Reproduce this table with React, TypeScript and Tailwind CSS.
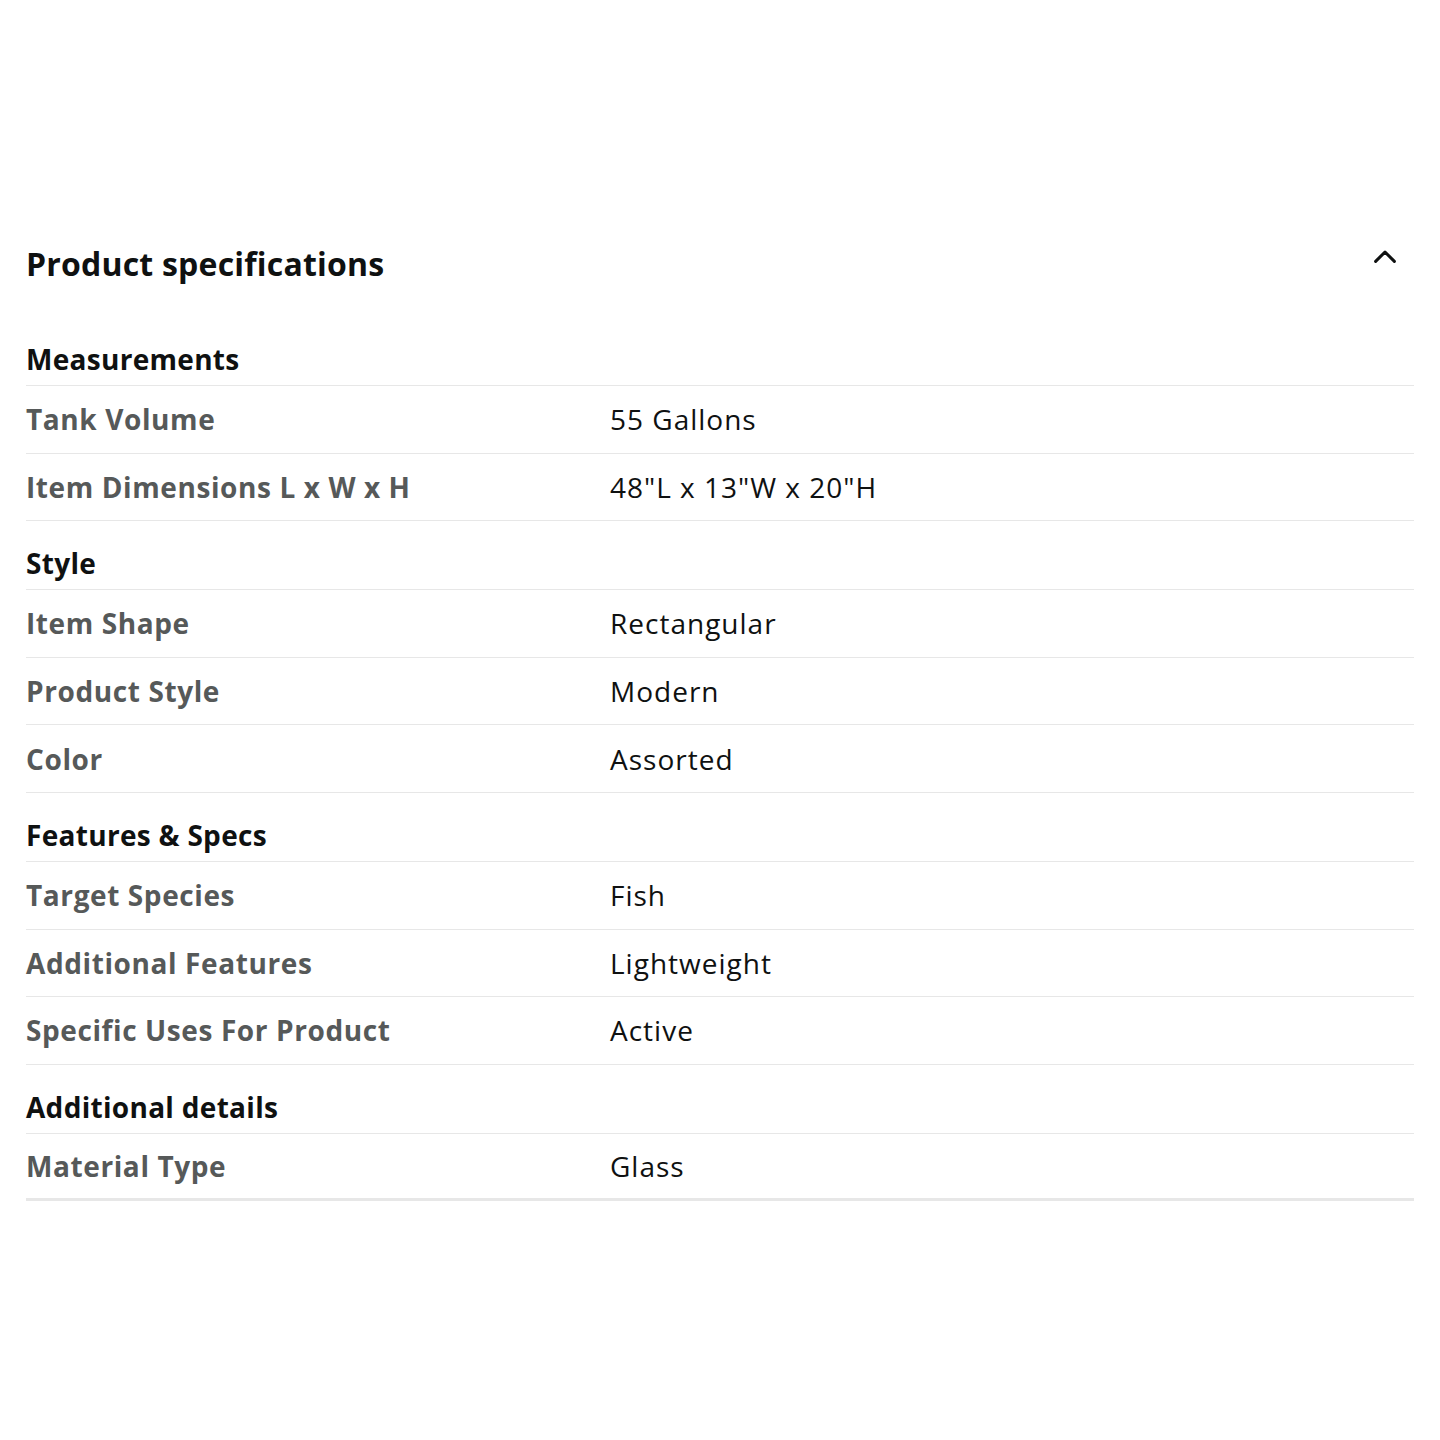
import React from 'react';

type Row = { label: string; value: string };
type Section = { title: string; rows: Row[] };

const sections: Section[] = [
  {
    title: 'Measurements',
    rows: [
      { label: 'Tank Volume', value: '55 Gallons' },
      { label: 'Item Dimensions L x W x H', value: '48"L x 13"W x 20"H' },
    ],
  },
  {
    title: 'Style',
    rows: [
      { label: 'Item Shape', value: 'Rectangular' },
      { label: 'Product Style', value: 'Modern' },
      { label: 'Color', value: 'Assorted' },
    ],
  },
  {
    title: 'Features & Specs',
    rows: [
      { label: 'Target Species', value: 'Fish' },
      { label: 'Additional Features', value: 'Lightweight' },
      { label: 'Specific Uses For Product', value: 'Active' },
    ],
  },
  {
    title: 'Additional details',
    rows: [{ label: 'Material Type', value: 'Glass' }],
  },
];

const App: React.FC = () => {
  return (
    <div
      className="min-h-[1440px] bg-white px-[26px] pt-[244px] text-[#0f1111]"
      style={{ fontFamily: '"Open Sans", "Noto Sans", Arial, sans-serif' }}
    >
      <div className="flex items-center justify-between">
        <h2 className="text-[32px] font-bold leading-[40px] tracking-[0.2px]">Product specifications</h2>
        <svg width="30" height="30" viewBox="0 0 24 24" className="mr-[14px] -mt-[14px]" fill="none">
          <path d="M4.5 15.5 12 8l7.5 7.5" stroke="#0f1111" strokeWidth="2.4" strokeLinecap="round" strokeLinejoin="round" />
        </svg>
      </div>

      <div className="mt-[33px] flex flex-col">
        {sections.map((section, si) => (
          <div key={section.title}>
            <div className="border-b border-[#e7e7e7] pt-[24px] pb-[8px]">
              <h3 className="text-[28px] font-bold leading-[36px] tracking-[0.3px]">{section.title}</h3>
            </div>
            {section.rows.map((row, ri) => {
              const last = si === sections.length - 1 && ri === section.rows.length - 1;
              return (
                <div
                  key={row.label}
                  className={`flex h-[67.6px] items-center border-[#e7e7e7] ${last ? 'border-b-[3px]' : 'border-b'}`}
                >
                  <div className="w-[584px] shrink-0 text-[28px] font-bold tracking-[0.6px] text-[#565959]">{row.label}</div>
                  <div className="text-[28px] tracking-[1px] text-[#0f1111]">{row.value}</div>
                </div>
              );
            })}
          </div>
        ))}
      </div>
    </div>
  );
};

export default App;
